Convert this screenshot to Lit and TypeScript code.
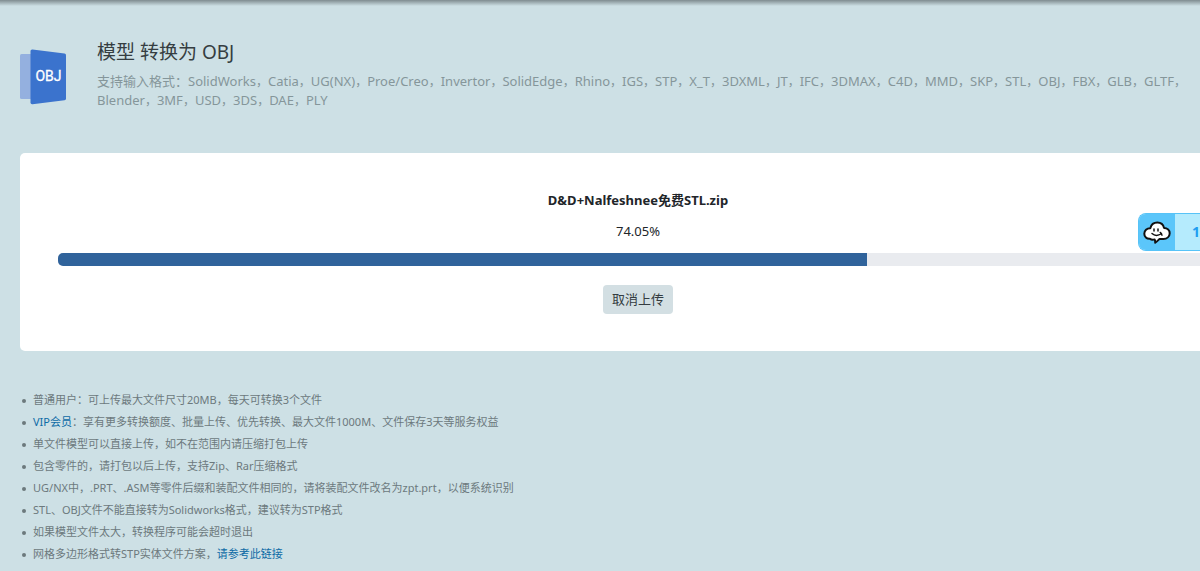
import { LitElement, html, css } from "lit";
import { customElement, property } from "lit/decorators.js";

@customElement("format-icon")
class FormatIcon extends LitElement {
  static styles = css`
    :host { display: block; flex: none; }
    svg { display: block; }
    .label { font: 400 14px Roboto, sans-serif; fill: #fff; stroke: #fff; stroke-width: 0.3px; }
  `;
  render() {
    return html`<svg width="46" height="56" viewBox="0 0 46 56" role="img" aria-label="OBJ">
      <path d="M1.5 5H11v45H1.5Q0 50 0 48.500V6.500Q0 5 1.500 5Z" fill="#94b0df" />
      <path d="M12.500 0.500L44.500 4.500Q46 4.800 46 6.300V49.500Q46 51 44.500 51.300L12.500 55.200Q10.500 55.400 10.500 53.500V2Q10.500 0.300 12.500 0.500Z" fill="#3b73cd" />
      <text class="label" x="28.500" y="31.500" text-anchor="middle">OBJ</text>
    </svg>`;
  }
}

@customElement("upload-card")
class UploadCard extends LitElement {
  @property() name = "";
  @property({ type: Number }) percent = 0;
  @property({ type: Number }) filled = 0;

  static styles = css`
    :host {
      display: flex;
      flex-direction: column;
      align-items: center;
      padding: 37px 38px;
      background: #fff;
      border-radius: 5px;
      color: #212529;
      font-size: 13px;
      line-height: 20px;
    }
    .name { margin: 0; font-size: 13px; font-weight: 700; }
    .percent { margin: 11px 0 12px; }
    .track {
      align-self: stretch;
      height: 13px;
      border-radius: 5px;
      background: #e9ebef;
      overflow: hidden;
    }
    .fill { height: 100%; background: #30639b; }
    .cancel {
      margin: 19px 0 0;
      padding: 0 9px 1px;
      height: 29px;
      border: 0;
      border-radius: 4px;
      background: #d3dfe3;
      color: #343c41;
      font: inherit;
    }
  `;
  render() {
    return html`
      <h2 class="name">${this.name}</h2>
      <div class="percent">${this.percent}%</div>
      <div class="track" role="progressbar" aria-valuenow=${this.percent} aria-label=${this.name}>
        <div class="fill" style="width:${this.filled}%"></div>
      </div>
      <button class="cancel" type="button">取消上传</button>
    `;
  }
}

@customElement("cloud-widget")
class CloudWidget extends LitElement {
  static styles = css`
    :host {
      display: flex;
      box-sizing: border-box;
      height: 38px;
      overflow: hidden;
      border: 1px solid #57c3f7;
      border-right: 0;
      border-radius: 8px 0 0 8px;
      background: #b5ebfd;
    }
    .icon { display: grid; flex: none; place-items: center; width: 36px; background: #5bc6fa; }
    .count { padding-left: 17px; font-size: 14px; line-height: 36px; font-weight: 700; color: #1e9cf0; }
  `;
  render() {
    return html`
      <div class="icon">
        <svg width="28" height="24" viewBox="0 0 28 24" aria-hidden="true">
          <path d="M7.300 8.200C8.200 4.500 11 2.500 14.300 2.500C17.700 2.500 20.300 4.500 21 7.900C24.400 8 26.700 10.300 26.700 13.200C26.700 16.500 24 18.900 20.300 18.900H16.500C15.300 20.100 14 21.500 12.200 22.700C12.300 21.500 12.200 20.500 11.500 19.400C9.900 20 8.200 19.800 6.900 18.800C3.700 19.100 1.300 16.900 1.300 13.700C1.300 10.500 3.800 8.100 7.300 8.200Z" fill="#fff" stroke="#111" stroke-width="2" stroke-linejoin="round" />
          <path d="M11 9V11M15 9V11M9 13.500C11.500 15.800 15 16 18.500 13.500M17.300 12.500L19 15.200" fill="none" stroke="#111" stroke-width="1.500" stroke-linecap="round" />
        </svg>
      </div>
      <span class="count">1</span>
    `;
  }
}

@customElement("app-root")
class AppRoot extends LitElement {
  static styles = css`
    :host {
      display: block;
      position: relative;
      box-sizing: border-box;
      min-height: 100vh;
      overflow: hidden;
      background: #cde0e5;
      font-family: "Noto Sans", "Noto Sans CJK SC", sans-serif;
    }
    .shade { height: 6px; background: linear-gradient(#7f8c90, #cde0e5); }
    .page { width: calc(100% + 56px); box-sizing: border-box; padding-left: 20px; }
    .head { display: flex; gap: 31px; padding: 33px 56px 0 0; min-height: 114px; }
    .icon { margin-top: 10px; }
    .title { margin: 0; font-size: 19px; line-height: 26px; font-weight: 400; color: #353d41; }
    .formats { margin: 7px 0 0; font-size: 13px; line-height: 19px; color: #85969a; }
    .separator { font-size: 12px; }
    .rules {
      margin: 38px 0 0;
      padding: 0 0 6px 13px;
      list-style: none;
      font-size: 11px;
      line-height: 22px;
      color: #6c797d;
    }
    .rules li::before {
      content: "";
      display: inline-block;
      width: 4px;
      height: 4px;
      margin: 0 7px 0 -11px;
      border-radius: 50%;
      background: currentColor;
      vertical-align: middle;
    }
    .rules a { color: #0d6ba5; text-decoration: none; }
    .widget { position: absolute; top: 213px; right: 0; width: 62px; }
  `;
  formats = "SolidWorks,Catia,UG(NX),Proe/Creo,Invertor,SolidEdge,Rhino,IGS,STP,X_T,3DXML,JT,IFC,3DMAX,C4D,MMD,SKP,STL,OBJ,FBX,GLB,GLTF,Blender,3MF,USD,3DS,DAE,PLY".split(",");

  render() {
    return html`
      <div class="shade"></div>
      <main class="page">
        <header class="head">
          <format-icon class="icon"></format-icon>
          <div>
            <h1 class="title">模型 转换为 OBJ</h1>
            <p class="formats">支持输入格式：${this.formats.map(
              (name, i) => html`${i ? html`<span class="separator">，</span>` : ""}<span>${name}</span>`
            )}</p>
          </div>
        </header>
        <upload-card name="D&D+Nalfeshnee免费STL.zip" percent="74.05" filled="69.7"></upload-card>
        <ul class="rules">
          <li>普通用户：可上传最大文件尺寸20MB，每天可转换3个文件</li>
          <li><a href="#vip">VIP会员</a>：享有更多转换额度、批量上传、优先转换、最大文件1000M、文件保存3天等服务权益</li>
          <li>单文件模型可以直接上传，如不在范围内请压缩打包上传</li>
          <li>包含零件的，请打包以后上传，支持Zip、Rar压缩格式</li>
          <li>UG/NX中，.PRT、.ASM等零件后缀和装配文件相同的，请将装配文件改名为zpt.prt，以便系统识别</li>
          <li>STL、OBJ文件不能直接转为Solidworks格式，建议转为STP格式</li>
          <li>如果模型文件太大，转换程序可能会超时退出</li>
          <li>网格多边形格式转STP实体文件方案，<a href="#guide">请参考此链接</a></li>
        </ul>
      </main>
      <cloud-widget class="widget"></cloud-widget>
    `;
  }
}
